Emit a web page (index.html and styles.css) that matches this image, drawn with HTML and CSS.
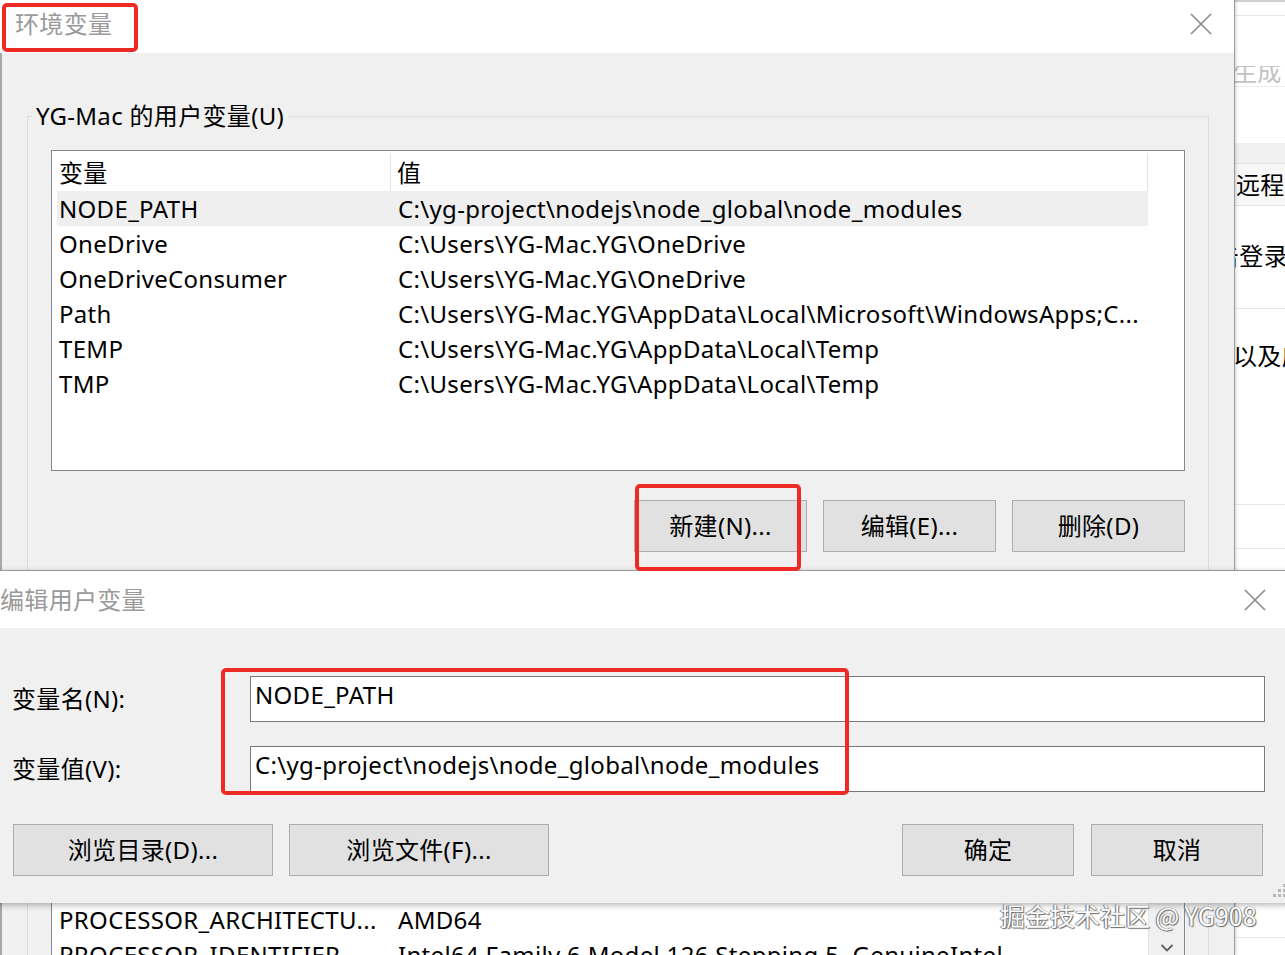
FILE: index.html
```html
<!DOCTYPE html>
<html lang="zh-CN">
<head>
<meta charset="utf-8">
<title>环境变量</title>
<link rel="stylesheet" href="styles.css">
</head>
<body>
<div class="desktop">

  <div class="bgwin">
    <div class="bg-top"></div>
    <div class="bg-gen"><span>生成</span></div>
    <div class="bg-band"></div>
    <div class="bg-row1">远程</div>
    <div class="bg-row2"><span class="cut">击</span>登录</div>
    <div class="bg-row3">以及应</div>
    <div class="bg-row4"></div>
    <div class="bg-row5"></div>
  </div>

  <div class="win env">
    <div class="titlebar">
      <span class="wtitle">环境变量</span>
      <svg class="xicon" width="22" height="22" viewBox="0 0 22 22"><path d="M1 1L21 21M21 1L1 21" stroke="#8a8a8a" stroke-width="1.6" fill="none"/></svg>
    </div>
    <div class="env-body">
      <div class="group">
        <div class="group-label">YG-Mac 的用户变量(U)</div>
        <div class="list user-list">
          <div class="lv-head"><div class="c c1">变量</div><div class="c c2">值</div></div>
          <div class="lv-row sel"><div class="c1">NODE_PATH</div><div class="c2">C:\yg-project\nodejs\node_global\node_modules</div></div>
          <div class="lv-row"><div class="c1">OneDrive</div><div class="c2">C:\Users\YG-Mac.YG\OneDrive</div></div>
          <div class="lv-row"><div class="c1">OneDriveConsumer</div><div class="c2">C:\Users\YG-Mac.YG\OneDrive</div></div>
          <div class="lv-row"><div class="c1">Path</div><div class="c2">C:\Users\YG-Mac.YG\AppData\Local\Microsoft\WindowsApps;C...</div></div>
          <div class="lv-row"><div class="c1">TEMP</div><div class="c2">C:\Users\YG-Mac.YG\AppData\Local\Temp</div></div>
          <div class="lv-row"><div class="c1">TMP</div><div class="c2">C:\Users\YG-Mac.YG\AppData\Local\Temp</div></div>
        </div>
        <div class="btn-row">
          <div class="btn">新建(N)...</div>
          <div class="btn">编辑(E)...</div>
          <div class="btn">删除(D)</div>
        </div>
      </div>

      <div class="group sys">
        <div class="group-label">系统变量(S)</div>
        <div class="list sys-list">
          <div class="lv-main">
            <div class="lv-head"><div class="c c1">变量</div><div class="c c2">值</div></div>
            <div class="lv-row"><div class="c1">ComSpec</div><div class="c2">C:\Windows\system32\cmd.exe</div></div>
            <div class="lv-row"><div class="c1">DriverData</div><div class="c2">C:\Windows\System32\Drivers\DriverData</div></div>
            <div class="lv-row"><div class="c1">NUMBER_OF_PROCESSORS</div><div class="c2">8</div></div>
            <div class="lv-row"><div class="c1">OS</div><div class="c2">Windows_NT</div></div>
            <div class="lv-row"><div class="c1">Path</div><div class="c2">C:\Windows\system32;C:\Windows;C:\Windows\System32\Wbem;...</div></div>
            <div class="lv-row"><div class="c1">PATHEXT</div><div class="c2">.COM;.EXE;.BAT;.CMD;.VBS;.VBE;.JS;.JSE;.WSF;.WSH;.MSC</div></div>
            <div class="lv-row"><div class="c1">PROCESSOR_ARCHITECTU...</div><div class="c2">AMD64</div></div>
            <div class="lv-row"><div class="c1">PROCESSOR_IDENTIFIER</div><div class="c2">Intel64 Family 6 Model 126 Stepping 5, GenuineIntel</div></div>
          </div>
          <div class="scrollbar">
            <div class="sb-track"></div>
            <div class="sb-arrow"><svg width="14" height="10" viewBox="0 0 14 10"><path d="M1.5 2L7 7.5L12.5 2" stroke="#606060" stroke-width="1.8" fill="none"/></svg></div>
          </div>
        </div>
      </div>
    </div>
  </div>

  <div class="win edit">
    <div class="titlebar">
      <span class="wtitle">编辑用户变量</span>
      <svg class="xicon" width="22" height="22" viewBox="0 0 22 22"><path d="M1 1L21 21M21 1L1 21" stroke="#8a8a8a" stroke-width="1.6" fill="none"/></svg>
    </div>
    <div class="edit-body">
      <div class="form">
        <div class="flabel">变量名(N):</div>
        <div class="field">NODE_PATH</div>
        <div class="flabel">变量值(V):</div>
        <div class="field">C:\yg-project\nodejs\node_global\node_modules</div>
      </div>
      <div class="edit-btns">
        <div class="btn wide">浏览目录(D)...</div>
        <div class="btn wide">浏览文件(F)...</div>
        <div class="spacer"></div>
        <div class="btn">确定</div>
        <div class="btn">取消</div>
      </div>
    </div>
    <svg class="grip" width="18" height="18" viewBox="0 0 18 18">
      <rect x="13" y="1" width="3" height="3" fill="#b8b8b8"/>
      <rect x="8" y="6" width="3" height="3" fill="#b8b8b8"/>
      <rect x="13" y="6" width="3" height="3" fill="#b8b8b8"/>
      <rect x="3" y="11" width="3" height="3" fill="#b8b8b8"/>
      <rect x="8" y="11" width="3" height="3" fill="#b8b8b8"/>
      <rect x="13" y="11" width="3" height="3" fill="#b8b8b8"/>
    </svg>
  </div>

  <div class="mark m-title"></div>
  <div class="mark m-new"></div>
  <div class="mark m-fields"></div>

  <div class="watermark">掘金技术社区 @ YG908</div>
</div>
</body>
</html>
```

FILE: styles.css
```css
* { box-sizing: border-box; }
html, body { margin: 0; padding: 0; }
body {
  width: 1285px;
  height: 955px;
  overflow: hidden;
  background: #fff;
  font-family: "Noto Sans", "Noto Sans CJK SC", sans-serif;
  font-size: 24px;
  letter-spacing: 0.32px;
  color: #000;
}
.desktop { position: relative; width: 1285px; height: 955px; overflow: hidden; }

/* background window at the right edge */
.bgwin {
  position: absolute;
  left: 1235px;
  top: 0;
  width: 60px;
  height: 955px;
  background: #fff;
  overflow: hidden;
  white-space: nowrap;
}
.bg-top { height: 16px; border-top: 2px solid #cfcfcf; border-bottom: 1px solid #e6e6e6; }
.bg-gen { margin-top: 50px; height: 21px; overflow: hidden; line-height: 30px; color: #c2c2c2; border-bottom: 1px solid #ececec; }
.bg-gen span { display: block; margin-top: -9px; margin-left: -2px; }
.bg-band { margin-top: 56px; height: 21px; background: #f0f0f0; border-bottom: 1px solid #e2e2e2; }
.bg-row1 { height: 42px; line-height: 42px; background: #f7f7f7; border-bottom: 1px solid #e3e3e3; padding-left: 1px; }
.bg-row2 { height: 103px; line-height: 100px; border-bottom: 1px solid #e5e5e5; }
.bg-row2 .cut { margin-left: -20px; }
.bg-row3 { height: 196px; line-height: 34px; padding-top: 30px; border-bottom: 1px solid #e8e8e8; text-indent: -2px; }
.bg-row4 { height: 44px; border-bottom: 1px solid #e8e8e8; }
.bg-row5 { height: 389px; border-bottom: 1px solid #e8e8e8; }

/* windows */
.win { position: absolute; background: #f0f0f0; }
.titlebar { background: #fff; display: flex; align-items: center; justify-content: space-between; }
.wtitle { color: #9a9a9a; line-height: 30px; }
.xicon { display: block; }

.env {
  left: 0;
  top: 0;
  width: 1235px;
  height: 955px;
  border-right: 1px solid #9c9c9c;
  box-shadow: 1px 0 3px rgba(0, 0, 0, 0.18);
}
.env .titlebar { height: 53px; padding: 0 22px 5px 15px; }
.env-body { border-left: 2px solid #a8a8a8; padding: 63px 0 0 25px; height: 902px; }

.group {
  width: 1182px;
  border: 1px solid #dcdcdc;
  padding: 0 23px 47px 23px;
}
.group.sys { margin-top: 17px; padding-bottom: 20px; }
.group-label {
  width: fit-content;
  margin: -18px 0 0 -19px;
  padding: 0 4px;
  line-height: 34px;
  background: #f0f0f0;
}

.list {
  margin-top: 17px;
  border: 1px solid #828790;
  background: #fff;
  height: 321px;
  overflow: hidden;
}
.sys-list { height: 311px; display: flex; }
.lv-main { width: 1096px; }

.lv-head {
  display: grid;
  grid-template-columns: 339px 757px;
  width: 1096px;
  height: 40px;
  line-height: 40px;
  padding-top: 2px;
}
.lv-head .c { border-right: 1px solid #e5e5e5; height: 38px; }
.lv-head .c1 { padding-left: 7px; }
.lv-head .c2 { padding-left: 6px; }

.lv-row {
  display: grid;
  grid-template-columns: 334px 757px;
  width: 1091px;
  margin-left: 5px;
  height: 35px;
  line-height: 35px;
  white-space: nowrap;
}
.lv-row .c1 { padding-left: 2px; overflow: hidden; }
.lv-row .c2 { padding-left: 7px; overflow: hidden; }
.lv-row.sel { background: #efefef; }

.scrollbar { width: 36px; display: flex; flex-direction: column; background: #f0f0f0; border-left: 1px solid #e4e4e4; }
.sb-track { flex: 1; }
.sb-arrow { height: 26px; display: flex; align-items: center; justify-content: center; }

.btn-row { display: flex; justify-content: flex-end; gap: 16px; margin-top: 29px; }
.btn {
  width: 173px;
  height: 52px;
  background: #e1e1e1;
  border: 1px solid #adadad;
  line-height: 50px;
  text-align: center;
  color: #000;
  white-space: nowrap;
}

/* edit dialog */
.edit {
  left: -11px;
  top: 570px;
  width: 1301px;
  height: 333px;
  border-top: 1px solid #9a9a9a;
  box-shadow: 0 2px 6px rgba(0, 0, 0, 0.3);
}
.edit .titlebar { height: 57px; padding: 0 24px 0 11px; }
.edit-body { padding: 48px 25px 0 23px; }
.form {
  display: grid;
  grid-template-columns: 238px 1fr;
  row-gap: 24px;
  align-items: center;
}
.flabel { line-height: 34px; }
.field {
  height: 46px;
  background: #fff;
  border: 1px solid #7a7a7a;
  padding: 0 0 8px 4px;
  line-height: 36px;
  white-space: nowrap;
}
.edit-btns { display: flex; margin: 32px 2px 0 1px; gap: 16px; }
.edit-btns .btn { width: 172px; }
.edit-btns .btn.wide { width: 260px; }
.edit-btns .spacer { flex: 1; }
.edit-btns .btn:last-child { margin-left: 1px; }
.grip { position: absolute; right: 2px; bottom: 2px; }

/* red annotation boxes */
.mark {
  position: absolute;
  border: 4px solid #ee2a24;
  border-radius: 5px;
}
.m-title { left: 2px; top: 3px; width: 136px; height: 49px; }
.m-new { left: 635px; top: 484px; width: 166px; height: 87px; }
.m-fields { left: 221px; top: 668px; width: 628px; height: 127px; }

.watermark {
  position: absolute;
  left: 1000px;
  top: 898px;
  font-family: "Noto Sans CJK SC", sans-serif;
  font-size: 25px;
  letter-spacing: 0;
  line-height: 34px;
  color: #fff;
  white-space: nowrap;
  text-shadow: 0 0 1px #505050, 1px 1px 1px #707070, -1px 0 1px #808080;
}
```
